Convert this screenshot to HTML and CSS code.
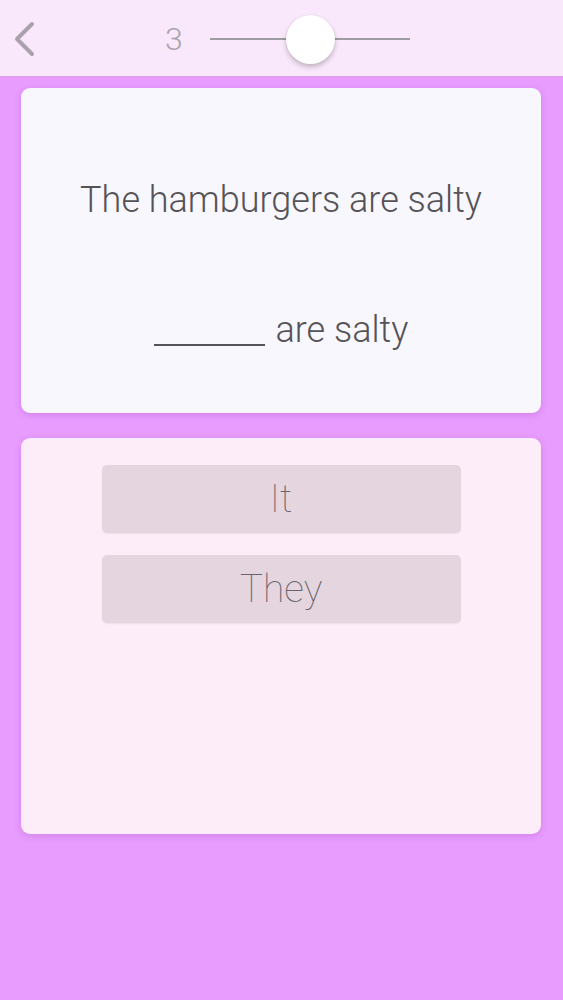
FILE: index.html
```html
<!DOCTYPE html>
<html>
<head>
<meta charset="utf-8">
<link rel="stylesheet" href="styles.css">
</head>
<body>
<div class="app">
  <header class="topbar">
    <svg class="back" width="24" height="36" viewBox="0 0 24 36"><path d="M20 3 L5 18 L20 33" fill="none" stroke="#a9a2ad" stroke-width="4" stroke-linecap="round" stroke-linejoin="round"/></svg>
    <span class="level">3</span>
    <div class="slider">
      <div class="track"></div>
      <div class="thumb"></div>
    </div>
  </header>
  <main class="content">
    <section class="card question">
      <p class="sentence">The hamburgers are salty</p>
      <p class="sentence blank-line"><span class="blank"></span> are salty</p>
    </section>
    <section class="card answers">
      <button class="option">It</button>
      <button class="option">They</button>
    </section>
  </main>
</div>
</body>
</html>
```
FILE: styles.css
```css
* { box-sizing: border-box; }
html, body { margin: 0; padding: 0; }
body {
  width: 563px;
  height: 1000px;
  background: #e89cfe;
  font-family: Roboto, "Liberation Sans", sans-serif;
  overflow: hidden;
}
.app { display: flex; flex-direction: column; height: 1000px; }
.topbar {
  height: 78px;
  background: #f9e8fb;
  border-bottom: 2px solid #df9df2;
  display: flex;
  align-items: center;
  padding-left: 12px;
}
.back { margin-top: 2px; }
.level {
  font-size: 32px;
  font-weight: 300;
  color: #a8a4ab;
  margin-left: 129px;
  margin-top: 2px;
}
.slider {
  position: relative;
  width: 200px;
  height: 50px;
  margin-left: 27px;
  display: flex;
  align-items: center;
}
.track { width: 100%; height: 2px; background: #9f9ba3; margin-top: 2px; }
.thumb {
  position: absolute;
  left: 76px;
  top: 2px;
  width: 49px;
  height: 49px;
  border-radius: 50%;
  background: #ffffff;
  box-shadow: 0 3px 5px rgba(0,0,0,0.22), 0 0 1px rgba(0,0,0,0.15);
}
.content {
  padding: 10px 22px 0 21px;
  display: flex;
  flex-direction: column;
  gap: 25px;
}
.card {
  border-radius: 9px;
  box-shadow: 0 2px 6px rgba(150, 60, 170, 0.25);
}
.question {
  height: 325px;
  background: #f8f7fd;
  display: flex;
  flex-direction: column;
  align-items: center;
  padding-top: 88px;
}
.sentence {
  margin: 0;
  font-size: 36px;
  font-weight: 300;
  color: #555357;
  line-height: 48px;
  white-space: nowrap;
}
.blank-line { margin-top: 82px; }
.blank {
  display: inline-block;
  width: 111px;
  border-bottom: 2px solid #555357;
  margin-bottom: -4px;
  margin-right: 2px;
}
.answers {
  height: 396px;
  background: #fdedf9;
  display: flex;
  flex-direction: column;
  align-items: center;
  padding-top: 27px;
  gap: 22px;
}
.option {
  width: 359px;
  height: 68px;
  border: none;
  border-radius: 5px;
  background: #e4d5df;
  box-shadow: 0 1px 2px rgba(0,0,0,0.06);
  font-family: Roboto, "Liberation Sans", sans-serif;
  font-size: 39px;
  font-weight: 100;
  color: #69646d;
  padding: 0;
}
```
